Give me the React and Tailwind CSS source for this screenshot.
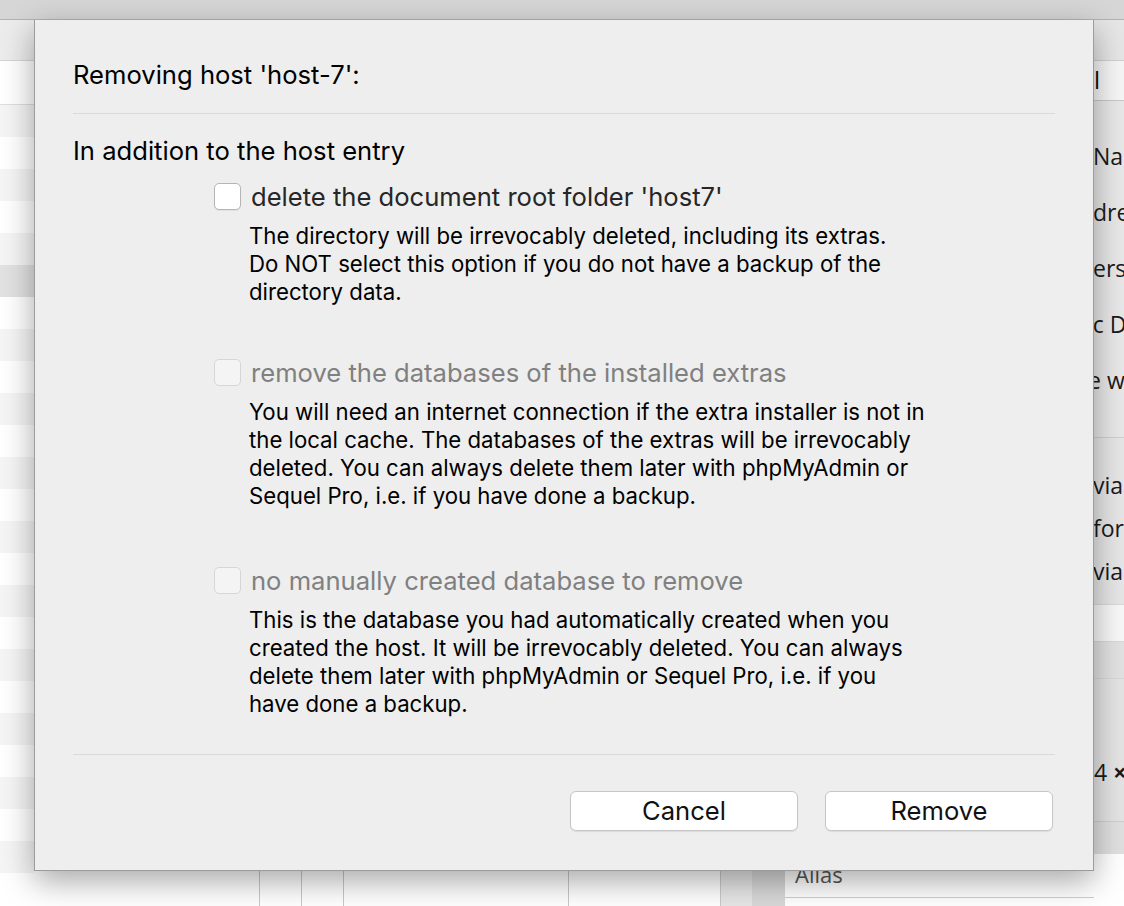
import React from "react";

const rowColors = [
  "bg-[#f5f5f5]", "bg-white", "bg-[#f5f5f5]", "bg-white", "bg-[#f5f5f5]", "bg-[#e2e2e2]",
  "bg-white", "bg-[#f5f5f5]", "bg-white", "bg-[#f5f5f5]", "bg-white", "bg-[#f5f5f5]",
  "bg-white", "bg-[#f5f5f5]", "bg-white", "bg-[#f5f5f5]", "bg-white", "bg-[#f5f5f5]",
  "bg-white", "bg-[#f5f5f5]", "bg-white", "bg-[#f5f5f5]", "bg-white", "bg-[#f5f5f5]",
];

function Checkbox({ disabled }) {
  return (
    <div
      className={
        disabled
          ? "w-[27px] h-[27px] shrink-0 rounded-[5px] border border-[#d6d6d6] bg-[#f4f4f4]"
          : "w-[27px] h-[27px] shrink-0 rounded-[5px] border border-[#b5b5b5] bg-white shadow-[0_1px_1px_rgba(0,0,0,0.06)]"
      }
    />
  );
}

function Option({ label, disabled, lines, className }) {
  return (
    <div className={"flex flex-col " + (className || "")}>
      <div className="flex items-center h-[27px]">
        <Checkbox disabled={disabled} />
        <span
          className={
            "ml-[10px] text-[25.6px] leading-[27px] whitespace-nowrap " +
            (disabled ? "text-[#808080]" : "text-[#262626]")
          }
        >
          {label}
        </span>
      </div>
      <div className="mt-[12px] ml-[35px] text-[22.2px] leading-[28px] text-black">
        {lines.map((l, i) => (
          <div key={i} className="whitespace-nowrap">{l}</div>
        ))}
      </div>
    </div>
  );
}

export default function App() {
  return (
    <div
      className="relative w-[1124px] h-[906px] overflow-hidden bg-white"
      style={{ fontFamily: "Inter, 'Liberation Sans', sans-serif" }}
    >
      {/* title bar of the window behind */}
      <div className="h-[20px] bg-[#d6d6d6] border-b border-[#b3b3b3]" />
      <div className="flex h-[886px]">
        {/* left list column */}
        <div className="w-[34px] flex flex-col">
          <div className="h-[41px] bg-[#ececec] border-b border-[#d6d6d6]" />
          <div className="h-[44px] bg-white border-b border-[#dedede]" />
          {rowColors.map((c, i) => (
            <div key={i} className={"h-[32px] shrink-0 " + c} />
          ))}
          <div className="flex-1 bg-white" />
        </div>
        {/* middle (behind sheet) */}
        <div className="flex-1 flex flex-col">
          <div className="flex-1 bg-[#f0f0f0]" />
          <div className="h-[35px] flex bg-white">
            <div className="w-[225px]" />
            <div className="w-[42px] border-l border-[#c8c8c8]" />
            <div className="w-[42px] border-l border-[#c8c8c8]" />
            <div className="w-[225px] border-l border-[#c8c8c8]" />
            <div className="w-[152px] border-l border-[#c8c8c8]" />
            <div className="w-[32px] bg-[#e6e6e6] border-l border-[#c8c8c8]" />
            <div className="w-[33px] bg-[#d8d8d8]" />
            <div className="flex-1 flex flex-col overflow-hidden">
              <div
                className="h-[26px] pl-[10px] text-[22px] leading-[26px] text-[#555] -mt-[10px]"
                style={{ fontFamily: "'Open Sans', sans-serif" }}
              >
                Alias
              </div>
              <div className="mt-[10px] border-t border-[#cfcfcf]" />
            </div>
          </div>
        </div>
        {/* right detail column */}
        <div
          className="w-[30px] flex flex-col text-[23px] text-[#1a1a1a]"
          style={{ fontFamily: "'Open Sans', sans-serif" }}
        >
          <div className="h-[41px] bg-[#e6e6e6] border-b border-[#d0d0d0]" />
          <div className="h-[40px] bg-[#f6f6f6] border-b border-[#c8c8c8] pt-[4px] leading-[30px] text-[24px] text-[#111]">
            l
          </div>
          <div className="h-[337px] bg-[#e8e8e8] border-b border-[#d0d0d0] flex flex-col pt-[40px] gap-[26px] leading-[30px] whitespace-nowrap">
            <div className="-ml-[1px]">Name</div>
            <div className="-ml-[1px]">dress</div>
            <div className="-ml-[1px]">ersion</div>
            <div className="-ml-[7px]">ic Dir</div>
            <div className="-ml-[6px]">e with</div>
          </div>
          <div className="h-[166px] bg-[#e6e6e6] flex flex-col pt-[32px] gap-[13px] leading-[30px] whitespace-nowrap">
            <div className="-ml-[1px]">via</div>
            <div className="-ml-[1px]">for</div>
            <div className="-ml-[1px]">via</div>
          </div>
          <div className="h-[37px] bg-[#f8f8f8] border-t border-[#d8d8d8]" />
          <div className="h-[38px] bg-[#e2e2e2] border-t border-[#d8d8d8] border-b border-[#cfcfcf]" />
          <div className="h-[143px] bg-[#e4e4e4] border-b border-[#cfcfcf] pt-[78px] leading-[30px] whitespace-nowrap">
            4 <span className="font-bold">×</span>
          </div>
          <div className="h-[32px] bg-[#e0e0e0]" />
          <div className="flex-1 bg-white" />
        </div>
      </div>

      {/* the sheet */}
      <div className="absolute left-[34px] top-[20px] w-[1060px] h-[851px] bg-[#eeeeee] border-x border-b border-[#9c9c9c] shadow-[0_10px_30px_rgba(0,0,0,0.35)] flex flex-col px-[38px] pt-[41px]">
        <div className="text-[25.6px] leading-[28px] text-black">Removing host 'host-7':</div>
        <div className="mt-[24px] border-t border-[#dadada]" />
        <div className="mt-[23px] text-[25.6px] leading-[28px] text-black">In addition to the host entry</div>
        <div className="ml-[141px] mt-[18px] flex flex-col">
          <Option
            label="delete the document root folder 'host7'"
            lines={[
              "The directory will be irrevocably deleted, including its extras.",
              "Do NOT select this option if you do not have a backup of the",
              "directory data.",
            ]}
          />
          <Option
            className="mt-[53px]"
            disabled
            label="remove the databases of the installed extras"
            lines={[
              "You will need an internet connection if the extra installer is not in",
              "the local cache. The databases of the extras will be irrevocably",
              "deleted. You can always delete them later with phpMyAdmin or",
              "Sequel Pro, i.e. if you have done a backup.",
            ]}
          />
          <Option
            className="mt-[57px]"
            disabled
            label="no manually created database to remove"
            lines={[
              "This is the database you had automatically created when you",
              "created the host. It will be irrevocably deleted. You can always",
              "delete them later with phpMyAdmin or Sequel Pro, i.e. if you",
              "have done a backup.",
            ]}
          />
        </div>
        <div className="mt-[36px] border-t border-[#dadada]" />
        <div className="mt-[36px] flex justify-end gap-[27px] pr-[2px]">
          <button className="w-[228px] h-[40px] rounded-[6px] bg-white border border-[#c6c6c6] shadow-[0_1px_1px_rgba(0,0,0,0.08)] text-[25.6px] text-[#111]">
            Cancel
          </button>
          <button className="w-[228px] h-[40px] rounded-[6px] bg-white border border-[#c6c6c6] shadow-[0_1px_1px_rgba(0,0,0,0.08)] text-[25.6px] text-[#111]">
            Remove
          </button>
        </div>
      </div>
    </div>
  );
}
